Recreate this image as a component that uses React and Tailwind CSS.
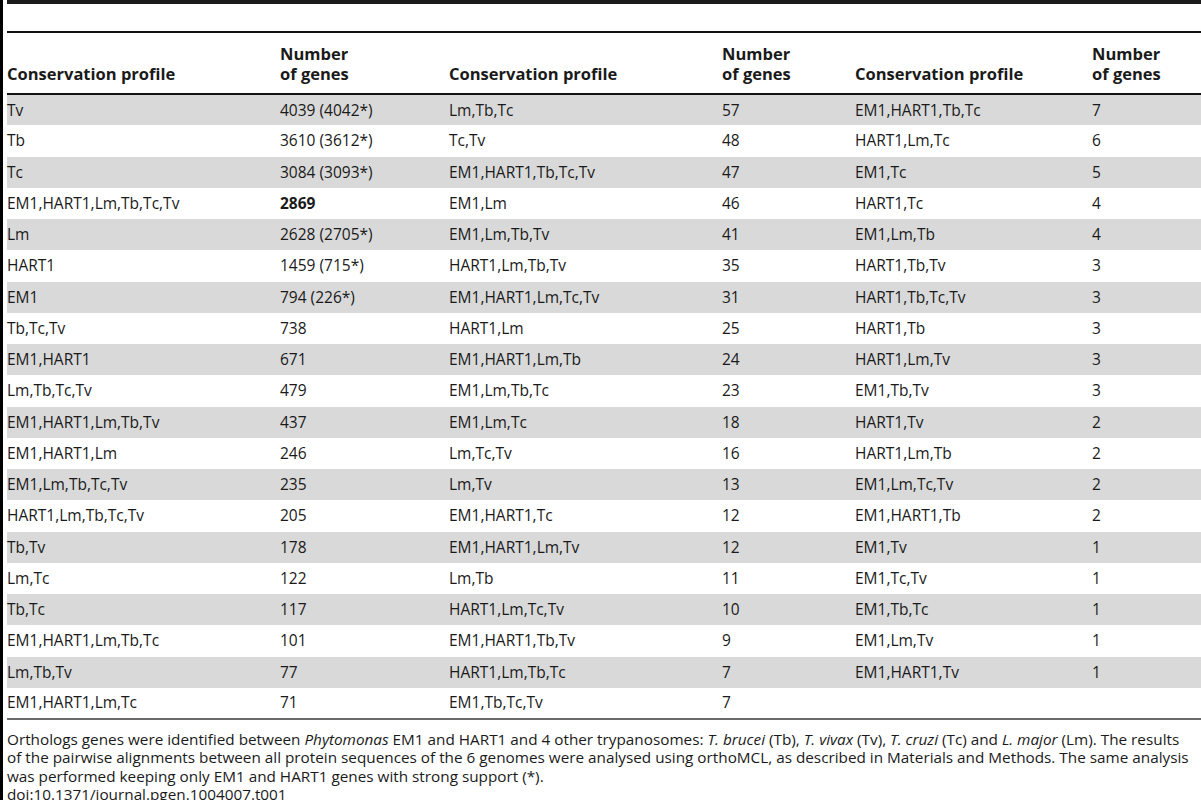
const rows = [
  ["Tv", "4039 (4042*)", "Lm,Tb,Tc", "57", "EM1,HART1,Tb,Tc", "7"],
  ["Tb", "3610 (3612*)", "Tc,Tv", "48", "HART1,Lm,Tc", "6"],
  ["Tc", "3084 (3093*)", "EM1,HART1,Tb,Tc,Tv", "47", "EM1,Tc", "5"],
  ["EM1,HART1,Lm,Tb,Tc,Tv", "2869", "EM1,Lm", "46", "HART1,Tc", "4"],
  ["Lm", "2628 (2705*)", "EM1,Lm,Tb,Tv", "41", "EM1,Lm,Tb", "4"],
  ["HART1", "1459 (715*)", "HART1,Lm,Tb,Tv", "35", "HART1,Tb,Tv", "3"],
  ["EM1", "794 (226*)", "EM1,HART1,Lm,Tc,Tv", "31", "HART1,Tb,Tc,Tv", "3"],
  ["Tb,Tc,Tv", "738", "HART1,Lm", "25", "HART1,Tb", "3"],
  ["EM1,HART1", "671", "EM1,HART1,Lm,Tb", "24", "HART1,Lm,Tv", "3"],
  ["Lm,Tb,Tc,Tv", "479", "EM1,Lm,Tb,Tc", "23", "EM1,Tb,Tv", "3"],
  ["EM1,HART1,Lm,Tb,Tv", "437", "EM1,Lm,Tc", "18", "HART1,Tv", "2"],
  ["EM1,HART1,Lm", "246", "Lm,Tc,Tv", "16", "HART1,Lm,Tb", "2"],
  ["EM1,Lm,Tb,Tc,Tv", "235", "Lm,Tv", "13", "EM1,Lm,Tc,Tv", "2"],
  ["HART1,Lm,Tb,Tc,Tv", "205", "EM1,HART1,Tc", "12", "EM1,HART1,Tb", "2"],
  ["Tb,Tv", "178", "EM1,HART1,Lm,Tv", "12", "EM1,Tv", "1"],
  ["Lm,Tc", "122", "Lm,Tb", "11", "EM1,Tc,Tv", "1"],
  ["Tb,Tc", "117", "HART1,Lm,Tc,Tv", "10", "EM1,Tb,Tc", "1"],
  ["EM1,HART1,Lm,Tb,Tc", "101", "EM1,HART1,Tb,Tv", "9", "EM1,Lm,Tv", "1"],
  ["Lm,Tb,Tv", "77", "HART1,Lm,Tb,Tc", "7", "EM1,HART1,Tv", "1"],
  ["EM1,HART1,Lm,Tc", "71", "EM1,Tb,Tc,Tv", "7", "", ""],
];

function Header() {
  const head = "pb-[10px] text-left text-[16.5px] font-bold leading-[19.5px]";
  return (
    <tr className="h-[62px] border-b-2 border-[#111] align-bottom">
      <th className={head}>Conservation profile</th>
      <th className={head}>
        Number
        <br />
        of genes
      </th>
      <th className={head}>Conservation profile</th>
      <th className={head}>
        Number
        <br />
        of genes
      </th>
      <th className={head}>Conservation profile</th>
      <th className={head}>
        Number
        <br />
        of genes
      </th>
    </tr>
  );
}

export default function App() {
  return (
    <div
      className="min-h-screen w-[1201px] border-l-[3px] border-black bg-white pl-[4px] text-[15.5px] text-[#1a1a1a]"
      style={{ fontFamily: '"Open Sans", "Noto Sans", sans-serif' }}
    >
      <div className="h-[4px] bg-[#1a1a1a]" />
      <div className="h-[27px]" />
      <table className="w-[1194px] table-fixed border-collapse border-t-2 border-[#111]">
        <colgroup>
          <col className="w-[273px]" />
          <col className="w-[169px]" />
          <col className="w-[273px]" />
          <col className="w-[133px]" />
          <col className="w-[237px]" />
          <col className="w-[109px]" />
        </colgroup>
        <thead>
          <Header />
        </thead>
        <tbody className="border-b-2 border-[#6b6b6b]">
          {rows.map((r, i) => (
            <tr
              key={i}
              className={`h-[31.25px] ${i % 2 === 0 ? "bg-[#d9d9d9]" : "bg-white"}`}
            >
              {r.map((c, j) => (
                <td
                  key={j}
                  className={`whitespace-nowrap p-0 align-middle ${
                    i === 3 && j === 1 ? "font-bold" : ""
                  }`}
                >
                  {c}
                </td>
              ))}
            </tr>
          ))}
        </tbody>
      </table>
      <div className="pt-[10px] text-[15.3px] leading-[18.3px]">
        <p className="whitespace-nowrap">
          Orthologs genes were identified between <i>Phytomonas</i> EM1 and HART1 and 4 other
          trypanosomes: <i>T. brucei</i> (Tb), <i>T. vivax</i> (Tv), <i>T. cruzi</i> (Tc) and{" "}
          <i>L. major</i> (Lm). The results
        </p>
        <p className="whitespace-nowrap">
          of the pairwise alignments between all protein sequences of the 6 genomes were analysed
          using orthoMCL, as described in Materials and Methods. The same analysis
        </p>
        <p className="whitespace-nowrap">
          was performed keeping only EM1 and HART1 genes with strong support (*).
        </p>
        <p>doi:10.1371/journal.pgen.1004007.t001</p>
      </div>
    </div>
  );
}
